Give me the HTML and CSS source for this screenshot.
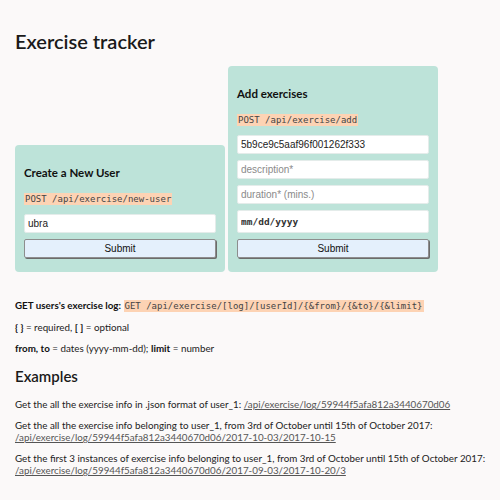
FILE: index.html
```html
<!DOCTYPE html>
<html>
<head>
<meta charset="utf-8">
<title>Exercise tracker</title>
<link rel="stylesheet" href="styles.css">
</head>
<body>
<h1 class="title">Exercise tracker</h1>
<div class="forms">
  <form class="card">
    <h3 class="card-title">Create a New User</h3>
    <p class="endpoint"><code class="code">POST /api/exercise/new-user</code></p>
    <input class="field" type="text" value="ubra">
    <button class="submit" type="button">Submit</button>
  </form>
  <form class="card">
    <h3 class="card-title">Add exercises</h3>
    <p class="endpoint"><code class="code">POST /api/exercise/add</code></p>
    <input class="field" type="text" value="5b9ce9c5aaf96f001262f333">
    <input class="field" type="text" placeholder="description*">
    <input class="field" type="text" placeholder="duration* (mins.)">
    <input class="field field-date" type="text" placeholder="mm/dd/yyyy">
    <button class="submit" type="button">Submit</button>
  </form>
</div>
<p class="line"><b>GET users's exercise log:</b> <code class="code">GET /api/exercise/[log]/[userId]/{&amp;from}/{&amp;to}/{&amp;limit}</code></p>
<p class="line"><b>{ }</b> = required, <b>[ ]</b> = optional</p>
<p class="line"><b>from, to</b> = dates (yyyy-mm-dd); <b>limit</b> = number</p>
<h2 class="subtitle">Examples</h2>
<p class="line">Get the all the exercise info in .json format of user_1: <a class="link" href="#">/api/exercise/log/59944f5afa812a3440670d06</a></p>
<p class="line">Get the all the exercise info belonging to user_1, from 3rd of October until 15th of October 2017:<br><a class="link" href="#">/api/exercise/log/59944f5afa812a3440670d06/2017-10-03/2017-10-15</a></p>
<p class="line">Get the first 3 instances of exercise info belonging to user_1, from 3rd of October until 15th of October 2017:<br><a class="link" href="#">/api/exercise/log/59944f5afa812a3440670d06/2017-09-03/2017-10-20/3</a></p>
</body>
</html>
```
FILE: styles.css
```css
html, body {
  margin: 0;
  background: #fbf9f9;
}
body {
  padding: 0 12px 0 15px;
  font-family: Lato, "Open Sans", sans-serif;
  font-size: 9.8px;
  color: #222;
}
.title {
  margin: 0;
  padding-top: 29px;
  font-size: 20px;
  font-weight: 600;
  line-height: 24px;
  color: #1a1a1a;
}
.forms {
  display: flex;
  align-items: flex-end;
  gap: 3px;
  margin-top: 13px;
}
.card {
  box-sizing: border-box;
  width: 210px;
  padding: 21px 9px 14px;
  background: #bde3d9;
  border-radius: 4px;
  display: flex;
  flex-direction: column;
}
.card-title {
  margin: 0;
  font-size: 11.5px;
  font-weight: 700;
  line-height: 14px;
  color: #111;
}
.endpoint {
  margin: 12px 0 8px;
  line-height: 13px;
}
.code {
  font-family: "DejaVu Sans Mono", monospace;
  font-size: 9px;
  color: #444;
  background: #fdd3b4;
  padding: 1px 1px;
}
.field {
  box-sizing: border-box;
  width: 192px;
  height: 19px;
  margin: 0 0 6px;
  padding: 0 3px;
  border: 1px solid #e4ecea;
  border-radius: 2px;
  background: #fff;
  font-family: "Liberation Sans", Arial, sans-serif;
  font-size: 10px;
  color: #222;
  outline: none;
}
.field::placeholder {
  color: #8a8a8a;
}
.field-date {
  height: 23px;
  font-family: "DejaVu Sans Mono", monospace;
  font-size: 9.5px;
  font-weight: 700;
}
.field-date::placeholder {
  color: #333;
}
.submit {
  box-sizing: border-box;
  width: 192px;
  height: 19px;
  margin: 0;
  padding: 0;
  background: #e4f0fc;
  border: 1px solid #8d8d8d;
  border-radius: 2px;
  box-shadow: 1px 1px 0 #6b6b6b;
  font-family: "Liberation Sans", Arial, sans-serif;
  font-size: 10px;
  color: #111;
}
.line {
  margin: 9px 0;
  line-height: 12px;
}
.forms + .line {
  margin-top: 27px;
}
.line b {
  font-weight: 700;
  color: #111;
}
.subtitle {
  margin: 13px 0 13px;
  font-size: 15px;
  font-weight: 600;
  line-height: 18px;
  color: #1a1a1a;
}
.link {
  color: #555;
}
```
